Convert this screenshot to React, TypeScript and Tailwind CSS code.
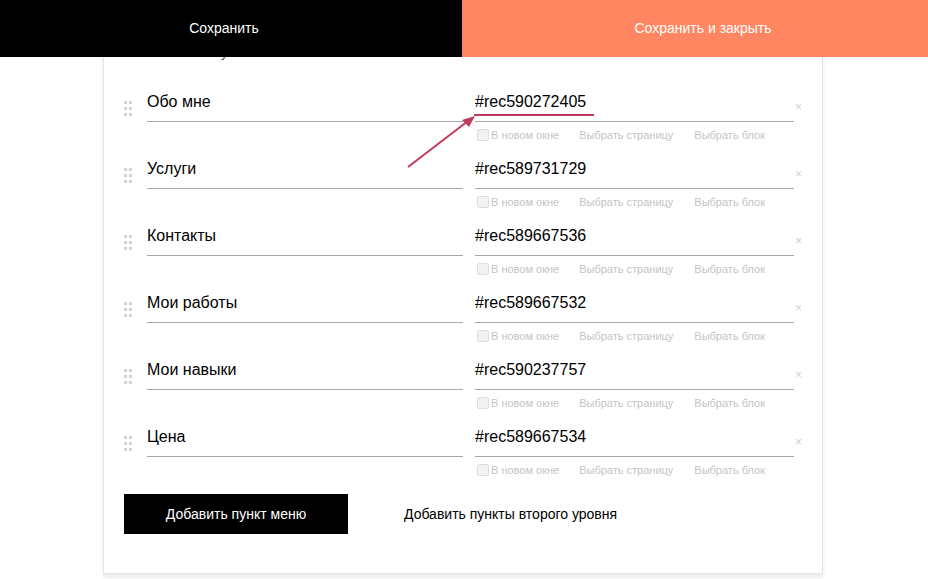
import React from "react";

const ITEMS = [
  { title: "Обо мне", link: "#rec590272405" },
  { title: "Услуги", link: "#rec589731729" },
  { title: "Контакты", link: "#rec589667536" },
  { title: "Мои работы", link: "#rec589667532" },
  { title: "Мои навыки", link: "#rec590237757" },
  { title: "Цена", link: "#rec589667534" },
];

function Handle() {
  return (
    <svg width="8" height="16" viewBox="0 0 8 16" className="block">
      {[0, 1, 2].map((r) =>
        [0, 1].map((c) => (
          <rect key={`${r}-${c}`} x={c * 5} y={r * 6 + 1} width="3" height="3" fill="#d4d4d4" />
        )),
      )}
    </svg>
  );
}

function Row({ title, link }: { title: string; link: string }) {
  return (
    <div className="flex h-[67px]">
      <div className="w-[43px] shrink-0 pl-[20px] pt-[17px]">
        <Handle />
      </div>
      <div className="w-[316px] shrink-0">
        <div className="flex h-[39px] items-center border-b border-[#a8a8a8] text-[16px] text-black">{title}</div>
      </div>
      <div className="ml-[12px] w-[319px] shrink-0">
        <div className="flex h-[39px] items-center border-b border-[#a8a8a8] text-[16px] text-black">{link}</div>
        <div className="flex h-[26px] items-center text-[11px] text-[#c4c4c4]">
          <span className="ml-[2px] mr-[2px] h-[12px] w-[12px] rounded-[2px] border border-[#dedede] bg-[#f2f2f2]" />
          <span>В новом окне</span>
          <span className="ml-[20px]">Выбрать страницу</span>
          <span className="ml-[21px]">Выбрать блок</span>
        </div>
      </div>
      <div className="pl-[1px] pt-[18px] text-[12px] leading-none text-[#cfcfcf]">×</div>
    </div>
  );
}

export default function App() {
  return (
    <div className="relative min-h-[579px] w-full overflow-hidden bg-white font-['Liberation_Sans',Arial,sans-serif]">
      <div className="absolute left-0 right-0 top-0 z-10 flex h-[57px] text-[14px] text-white">
        <div className="flex w-[462px] items-center justify-center bg-black pr-[14px]">Сохранить</div>
        <div className="flex flex-1 items-center justify-center bg-[#ff8661] pl-[16px]">Сохранить и закрыть</div>
      </div>

      <div className="ml-[103px] w-[720px] border border-t-0 border-[#e6e6e6] bg-white pb-[39px] shadow-[0_4px_4px_rgba(0,0,0,0.08)]">
        <div className="h-[83px] pl-[43px] pt-[42px] text-[14px] text-[#555]">Название пункта меню и ссылка</div>
        {ITEMS.map((it) => (
          <Row key={it.link} title={it.title} link={it.link} />
        ))}
        <div className="mt-[9px] flex items-center pl-[20px]">
          <button className="h-[40px] w-[224px] bg-black text-[14px] text-white">Добавить пункт меню</button>
          <span className="ml-[56px] text-[14px] text-black">Добавить пункты второго уровня</span>
        </div>
      </div>

      <svg className="pointer-events-none absolute left-0 top-0" width="928" height="579">
        <line x1="474" y1="115" x2="594" y2="115" stroke="#c03a5c" strokeWidth="2" />
        <line x1="408" y1="167" x2="468" y2="121" stroke="#c03a5c" strokeWidth="2" />
        <polygon points="475,116 462,120 469,127" fill="#c03a5c" />
      </svg>
    </div>
  );
}
